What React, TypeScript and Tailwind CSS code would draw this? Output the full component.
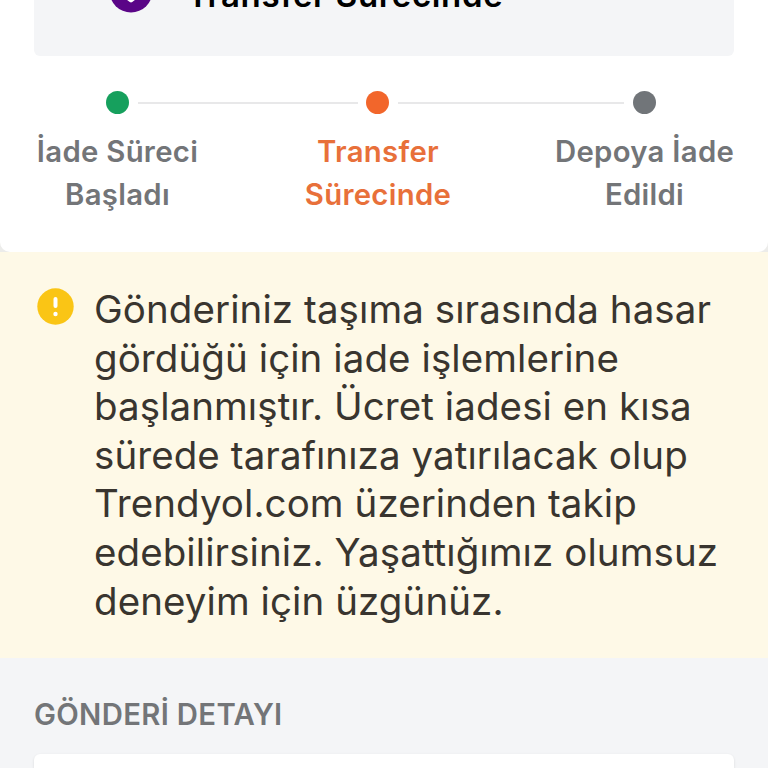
import clsx from 'clsx';

type Step = {
  lines: string[];
  textClass: string;
  dotClass: string;
};

const steps: Step[] = [
  { lines: ['İade Süreci', 'Başladı'], textClass: 'w-[167px] text-[#737578]', dotClass: 'bg-[#16a05d]' },
  { lines: ['Transfer', 'Sürecinde'], textClass: 'w-[166px] text-[#e8703a]', dotClass: 'bg-[#f2662b]' },
  { lines: ['Depoya İade', 'Edildi'], textClass: 'w-[179px] text-[#737578]', dotClass: 'bg-[#717579]' },
];

const noticeLines = [
  'Gönderiniz taşıma sırasında hasar',
  'gördüğü için iade işlemlerine',
  'başlanmıştır. Ücret iadesi en kısa',
  'sürede tarafınıza yatırılacak olup',
  'Trendyol.com üzerinden takip',
  'edebilirsiniz. Yaşattığımız olumsuz',
  'deneyim için üzgünüz.',
];

const StatusCard = () => (
  <div className="mx-[34px] flex h-14 shrink-0 items-end overflow-hidden rounded-b-md bg-[#f4f5f7] pb-[43px] pl-[75px]">
    <svg className="h-11 w-11 shrink-0" viewBox="0 0 44 44">
      <circle cx="22" cy="22" r="21.5" fill="#5a0587" />
      <path d="M15 26l7 5.5 7-5.5" fill="none" stroke="#fff" strokeWidth="4" strokeLinecap="round" strokeLinejoin="round" />
    </svg>
    <h1 className="-mb-0.5 ml-[34px] whitespace-nowrap text-[33px] font-semibold leading-10 tracking-[0.65px] text-black">
      Transfer Sürecinde
    </h1>
  </div>
);

const Dot = ({ className }: { className: string }) => (
  <span className={clsx('h-[23px] w-[23px] shrink-0 rounded-full', className)} />
);

const ReturnSteps = () => (
  <div>
    <div className="mt-[35px] flex items-center pl-[106px] pr-[112px]">
      <Dot className={steps[0].dotClass} />
      <span className="ml-[9px] mr-2 h-0.5 w-[220px] bg-[#e8e8e9]" />
      <Dot className={steps[1].dotClass} />
      <span className="ml-[9px] mr-auto h-0.5 w-[226px] bg-[#e8e8e9]" />
      <Dot className={steps[2].dotClass} />
    </div>
    <div className="mt-[17px] flex justify-between pl-[34px] pr-[34px]">
      {steps.map((step) => (
        <p
          key={step.lines[0]}
          className={clsx(
            'whitespace-nowrap text-center text-[29.3px] font-semibold leading-[42.5px] tracking-[0.3px]',
            step.textClass
          )}
        >
          {step.lines[0]}
          <br />
          {step.lines[1]}
        </p>
      ))}
    </div>
  </div>
);

const Notice = () => (
  <section className="flex h-[406px] shrink-0 bg-[#fef9e7] pl-[37px] pt-[33px]">
    <svg className="mt-[3px] h-[37px] w-[37px] shrink-0" viewBox="0 0 37 37">
      <circle cx="18.5" cy="18.5" r="18.2" fill="#fac515" />
      <path d="M18.5 11v7" stroke="#fff" strokeWidth="4" strokeLinecap="round" />
      <circle cx="18.5" cy="26" r="2.2" fill="#fff" />
    </svg>
    <p className="ml-5 whitespace-nowrap text-[38.5px] leading-[48.6px] tracking-[0.08px] text-[#39352f]">
      {noticeLines.map((line) => (
        <span key={line} className="block">
          {line}
        </span>
      ))}
    </p>
  </section>
);

export default function App() {
  return (
    <main className="flex h-[768px] w-[768px] flex-col overflow-hidden bg-[#f4f5f7] font-['Inter',sans-serif]">
      <div className="h-[252px] shrink-0 bg-[#ececea]">
        <section className="flex h-full flex-col rounded-b-[10px] bg-white">
          <StatusCard />
          <ReturnSteps />
        </section>
      </div>
      <Notice />
      <section className="flex grow flex-col px-[34px] pt-[37px]">
        <h2 className="text-[29.3px] font-semibold leading-10 tracking-[0.33px] text-[#737578]">GÖNDERİ DETAYI</h2>
        <div className="mt-[19px] grow rounded-t-md bg-white shadow-sm" />
      </section>
    </main>
  );
}
